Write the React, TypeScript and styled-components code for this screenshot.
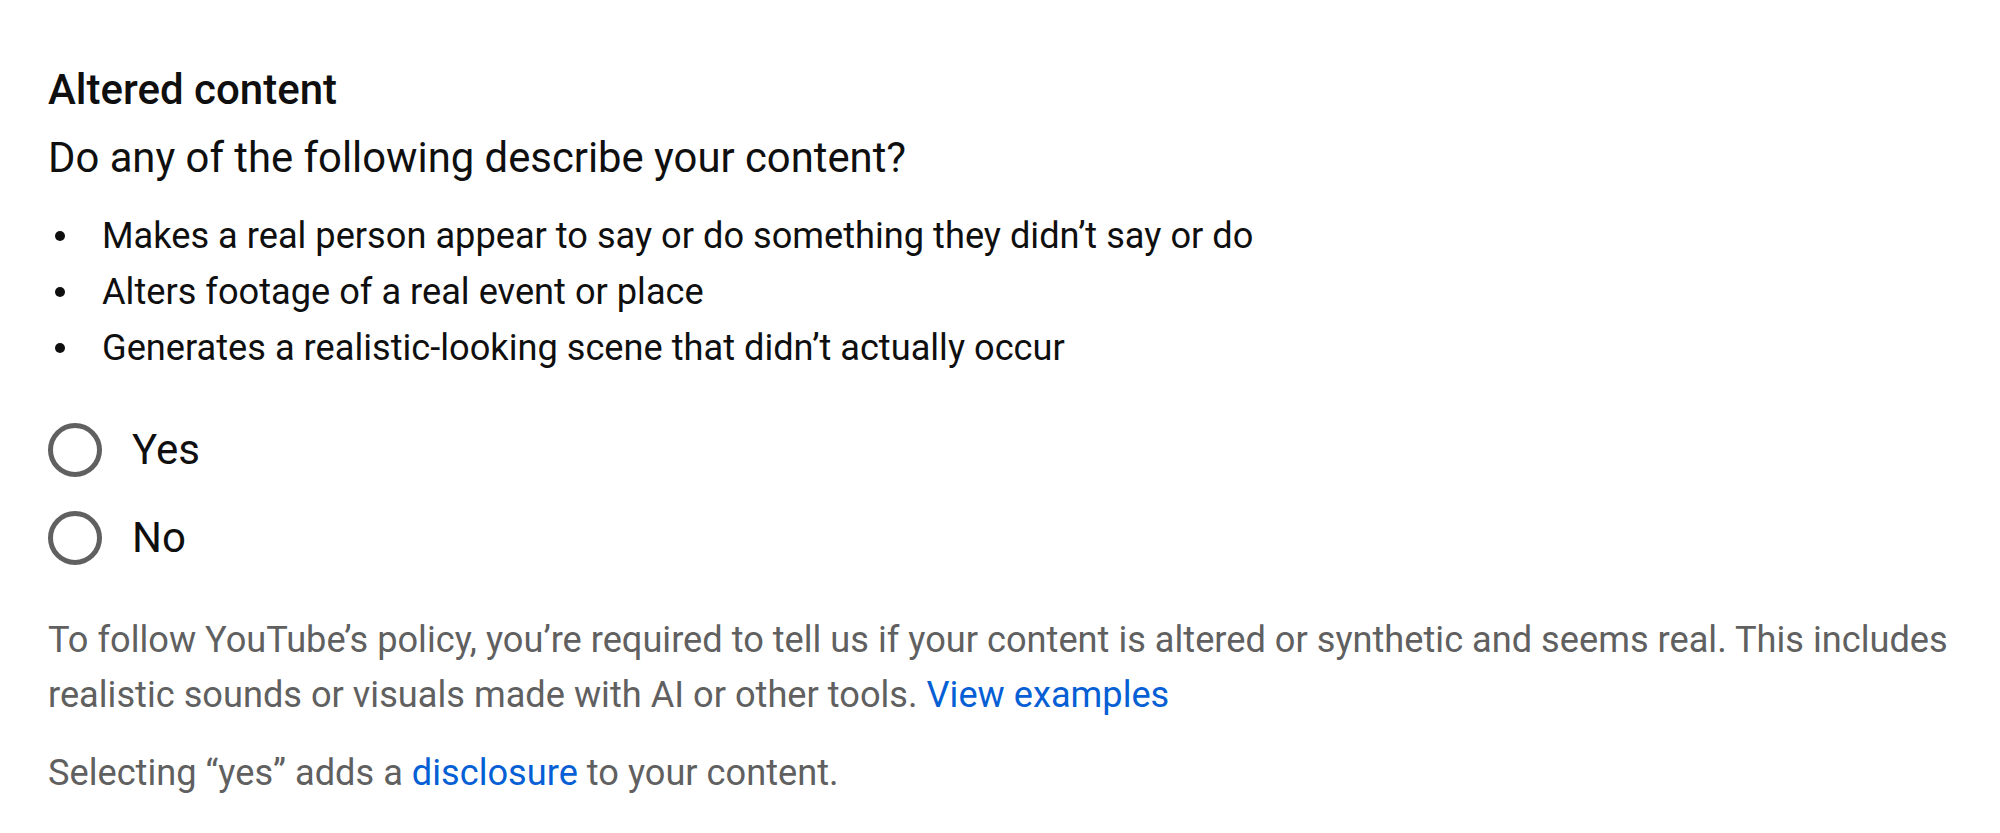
import styled, { createGlobalStyle } from "styled-components";

const GlobalStyle = createGlobalStyle`
  html, body {
    margin: 0;
    padding: 0;
    background: #ffffff;
  }
  body {
    font-family: Roboto, "Noto Sans", Arial, sans-serif;
    color: #0f0f0f;
  }
`;

const Section = styled.section`
  display: flex;
  flex-direction: column;
  padding: 66px 20px 0 48px;
`;

const Title = styled.h2`
  margin: 0;
  font-size: 42px;
  line-height: 48px;
  font-weight: 500;
  color: #0f0f0f;
`;

const Question = styled.p`
  margin: 20px 0 0;
  font-size: 41.8px;
  line-height: 48px;
  font-weight: 400;
`;

const List = styled.ul`
  list-style: none;
  margin: 26px 0 0;
  padding: 0;
`;

const Item = styled.li`
  display: flex;
  align-items: center;
  font-size: 36.2px;
  line-height: 56px;

  &::before {
    content: "";
    flex: none;
    width: 10px;
    height: 10px;
    border-radius: 50%;
    background: #0f0f0f;
    margin: 0 37px 0 7px;
  }
`;

const Options = styled.div`
  display: flex;
  flex-direction: column;
  margin-top: 29.5px;
`;

const Option = styled.label`
  display: flex;
  align-items: center;
  height: 88px;
  gap: 30px;
  font-size: 42px;
  cursor: pointer;
`;

const Circle = styled.span<{ $checked?: boolean }>`
  flex: none;
  box-sizing: border-box;
  width: 54px;
  height: 54px;
  border-radius: 50%;
  border: 5px solid ${(p) => (p.$checked ? "#065fd4" : "#606060")};
`;

const Note = styled.p<{ $gap: number }>`
  margin: ${(p) => p.$gap}px 0 0;
  font-size: 36.2px;
  line-height: 55px;
  color: #606060;
`;

const Link = styled.a`
  color: #065fd4;
  text-decoration: none;
`;

export default function App() {
  return (
    <>
      <GlobalStyle />
      <Section>
        <Title>Altered content</Title>
        <Question>Do any of the following describe your content?</Question>
        <List>
          <Item>Makes a real person appear to say or do something they didn’t say or do</Item>
          <Item>Alters footage of a real event or place</Item>
          <Item>Generates a realistic-looking scene that didn’t actually occur</Item>
        </List>
        <Options>
          <Option>
            <Circle />
            Yes
          </Option>
          <Option>
            <Circle />
            No
          </Option>
        </Options>
        <Note $gap={30}>
          To follow YouTube’s policy, you’re required to tell us if your content is altered or
          synthetic and seems real. This includes realistic sounds or visuals made with AI or other
          tools. <Link href="#">View examples</Link>
        </Note>
        <Note $gap={23.5}>
          Selecting “yes” adds a <Link href="#">disclosure</Link> to your content.
        </Note>
      </Section>
    </>
  );
}
